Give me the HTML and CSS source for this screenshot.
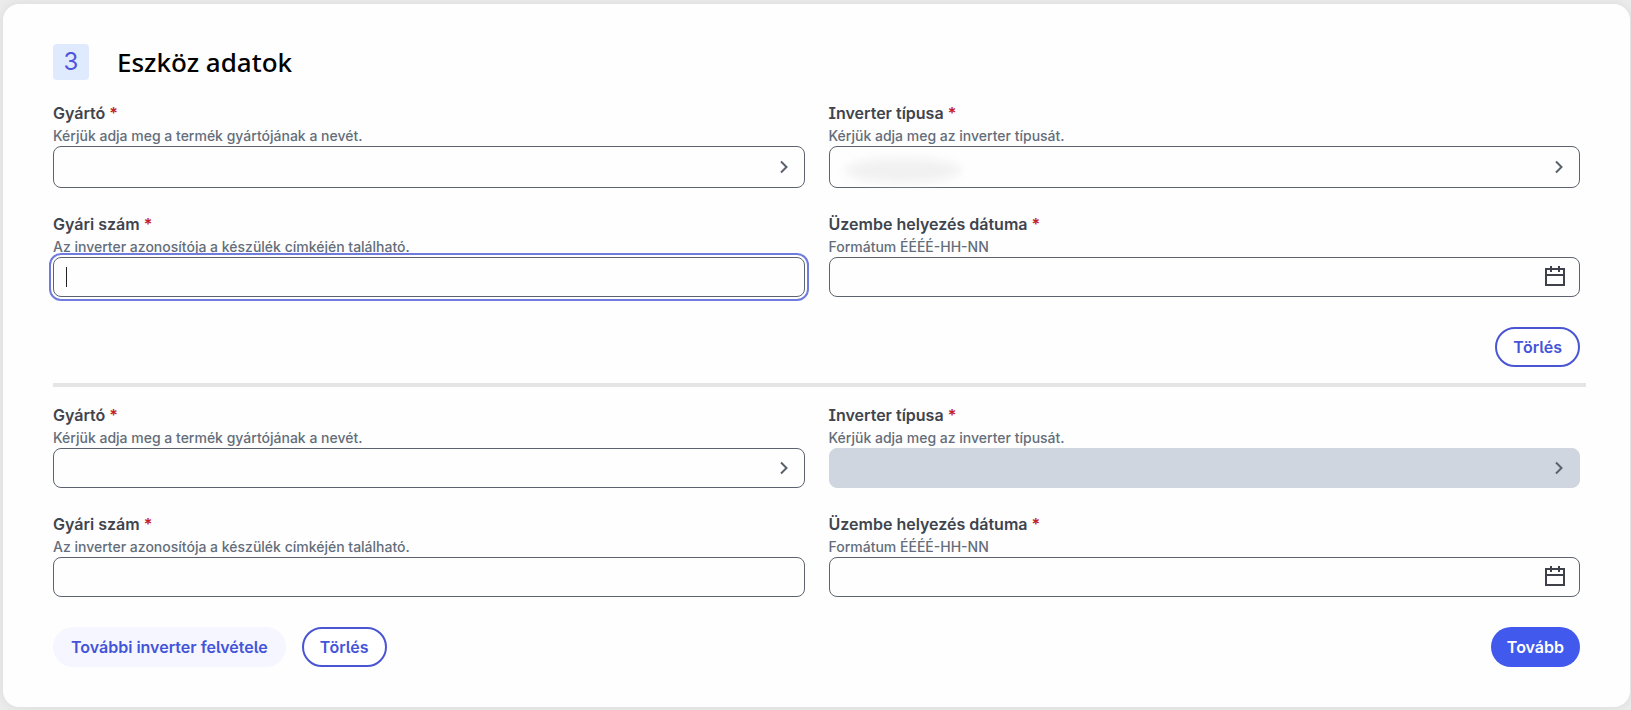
FILE: index.html
```html
<!DOCTYPE html>
<html lang="hu">
<head>
<meta charset="utf-8">
<meta name="viewport" content="width=device-width, initial-scale=1">
<title>Eszköz adatok</title>
<link rel="stylesheet" href="styles.css">
</head>
<body>
<svg width="0" height="0" class="sprite" aria-hidden="true">
  <symbol id="chevron" viewBox="0 0 16 16"><path d="M5 2.5 10.5 8 5 13.5" fill="none" stroke="currentColor" stroke-width="2"/></symbol>
  <symbol id="calendar" viewBox="0 0 20 20"><path d="M1 3h18v16H1zM1 9h18M6 0v6M14 0v6" fill="none" stroke="currentColor" stroke-width="2"/></symbol>
</svg>
<form class="card">
  <header class="card-header">
    <span class="step">3</span>
    <h2 class="title">Eszköz adatok</h2>
  </header>

  <section class="device">
    <div class="field">
      <label class="label" for="maker-1">Gyártó <span class="required">*</span></label>
      <p class="hint" id="maker-1-hint">Kérjük adja meg a termék gyártójának a nevét.</p>
      <div class="control-wrap">
        <select class="control control-tall" id="maker-1" aria-describedby="maker-1-hint"><option></option></select>
        <svg class="chevron"><use href="#chevron"/></svg>
      </div>
    </div>
    <div class="field">
      <label class="label" for="type-1">Inverter típusa <span class="required">*</span></label>
      <p class="hint" id="type-1-hint">Kérjük adja meg az inverter típusát.</p>
      <div class="control-wrap">
        <select class="control control-tall" id="type-1" aria-describedby="type-1-hint"><option></option></select>
        <span class="redacted"></span>
        <svg class="chevron"><use href="#chevron"/></svg>
      </div>
    </div>
    <div class="field">
      <label class="label" for="serial-1">Gyári szám <span class="required">*</span></label>
      <p class="hint" id="serial-1-hint">Az inverter azonosítója a készülék címkéjén található.</p>
      <div class="control-wrap">
        <input class="control focused" type="text" id="serial-1" aria-describedby="serial-1-hint">
        <span class="caret"></span>
      </div>
    </div>
    <div class="field">
      <label class="label" for="date-1">Üzembe helyezés dátuma <span class="required">*</span></label>
      <p class="hint" id="date-1-hint">Formátum ÉÉÉÉ-HH-NN</p>
      <div class="control-wrap">
        <input class="control" type="text" id="date-1" aria-describedby="date-1-hint">
        <button class="date-button" type="button" aria-label="Naptár"><svg class="calendar"><use href="#calendar"/></svg></button>
      </div>
    </div>
  </section>
  <div class="actions actions-end">
    <button class="button button-outline" type="button">Törlés</button>
  </div>

  <hr class="divider">

  <section class="device">
    <div class="field">
      <label class="label" for="maker-2">Gyártó <span class="required">*</span></label>
      <p class="hint" id="maker-2-hint">Kérjük adja meg a termék gyártójának a nevét.</p>
      <div class="control-wrap">
        <select class="control" id="maker-2" aria-describedby="maker-2-hint"><option></option></select>
        <svg class="chevron"><use href="#chevron"/></svg>
      </div>
    </div>
    <div class="field">
      <label class="label" for="type-2">Inverter típusa <span class="required">*</span></label>
      <p class="hint" id="type-2-hint">Kérjük adja meg az inverter típusát.</p>
      <div class="control-wrap">
        <select class="control" id="type-2" aria-describedby="type-2-hint" disabled><option></option></select>
        <svg class="chevron"><use href="#chevron"/></svg>
      </div>
    </div>
    <div class="field">
      <label class="label" for="serial-2">Gyári szám <span class="required">*</span></label>
      <p class="hint" id="serial-2-hint">Az inverter azonosítója a készülék címkéjén található.</p>
      <div class="control-wrap">
        <input class="control" type="text" id="serial-2" aria-describedby="serial-2-hint">
      </div>
    </div>
    <div class="field">
      <label class="label" for="date-2">Üzembe helyezés dátuma <span class="required">*</span></label>
      <p class="hint" id="date-2-hint">Formátum ÉÉÉÉ-HH-NN</p>
      <div class="control-wrap">
        <input class="control" type="text" id="date-2" aria-describedby="date-2-hint">
        <button class="date-button" type="button" aria-label="Naptár"><svg class="calendar"><use href="#calendar"/></svg></button>
      </div>
    </div>
  </section>
  <div class="actions">
    <button class="button button-soft" type="button">További inverter felvétele</button>
    <button class="button button-outline" type="button">Törlés</button>
    <button class="button button-primary" type="submit">Tovább</button>
  </div>
</form>
</body>
</html>
```
FILE: styles.css
```css
* {
  box-sizing: border-box;
}

body {
  margin: 0;
  padding: 4px 1px 3px 3px;
  background: #ececec;
  font-family: Inter, "Liberation Sans", sans-serif;
  color: #3f444d;
}

.sprite {
  position: absolute;
}

.card {
  padding: 40px 50px;
  border-radius: 16px;
  background: #fefefe;
  box-shadow: 0 0 12px rgba(0, 0, 0, 0.08);
}

.card-header {
  display: flex;
  align-items: center;
  gap: 28px;
  margin-bottom: 22px;
}

.step {
  width: 36px;
  height: 36px;
  border-radius: 4px;
  background: #e0eafe;
  color: #4e55dc;
  font-size: 24px;
  line-height: 36px;
  text-align: center;
}

.title {
  margin: 0;
  color: #000;
  font-family: "Noto Sans", sans-serif;
  font-size: 26px;
  font-weight: 500;
  line-height: 36px;
}

.device {
  display: grid;
  grid-template-columns: 1fr 1fr;
  gap: 25px 24px;
}

.label {
  display: block;
  margin-bottom: 2px;
  font-size: 16px;
  font-weight: 600;
  line-height: 22px;
  font-feature-settings: "cv08";
}

.required {
  color: #c3201f;
}

.hint {
  margin: 0;
  color: #646d7a;
  font-size: 14px;
  font-weight: 500;
  line-height: 20px;
}

.control-wrap {
  position: relative;
}

.control {
  display: block;
  width: 100%;
  height: 40px;
  padding: 0 12px;
  border: 1px solid #5d636e;
  border-radius: 8px;
  background: #fefefe;
  font: inherit;
  appearance: none;
}

.control-tall {
  height: 42px;
}

.control:disabled {
  border-color: #d0d6df;
  background: #d0d6df;
  opacity: 1;
}

.focused {
  outline: 2px solid #707cdd;
  outline-offset: 2px;
}

.caret {
  position: absolute;
  top: 10px;
  left: 13px;
  width: 1px;
  height: 20px;
  background: #222;
}

.redacted {
  position: absolute;
  top: 12px;
  left: 16px;
  width: 116px;
  height: 24px;
  border-bottom: 1px dotted #ccc;
  border-radius: 50%;
  background: #f1f1f1;
  filter: blur(5px);
}

.chevron {
  position: absolute;
  top: 50%;
  right: 13px;
  width: 16px;
  height: 16px;
  margin-top: -8px;
  color: #5b616c;
  pointer-events: none;
}

.date-button {
  position: absolute;
  top: 9px;
  right: 15px;
  padding: 0;
  border: 0;
  background: none;
  color: #3e414a;
}

.calendar {
  display: block;
  width: 20px;
  height: 20px;
}

.actions {
  display: flex;
  gap: 16px;
  margin-top: 30px;
}

.actions-end {
  justify-content: flex-end;
}

.divider {
  height: 4px;
  margin: 16px -6px 17px 0;
  border: 0;
  background: #e5e5e5;
}

.button {
  height: 40px;
  padding: 0 16px;
  border: 2px solid transparent;
  border-radius: 20px;
  font-family: inherit;
  font-size: 16px;
  font-weight: 600;
  font-feature-settings: "cv05";
}

.button-outline {
  border-color: #4a55d4;
  background: #fff;
  color: #4454d8;
}

.button-soft {
  background: #f5f6ff;
  color: #4454d8;
}

.button-primary {
  margin-left: auto;
  padding: 0 14px;
  background: #4259ee;
  color: #fff;
}
```
